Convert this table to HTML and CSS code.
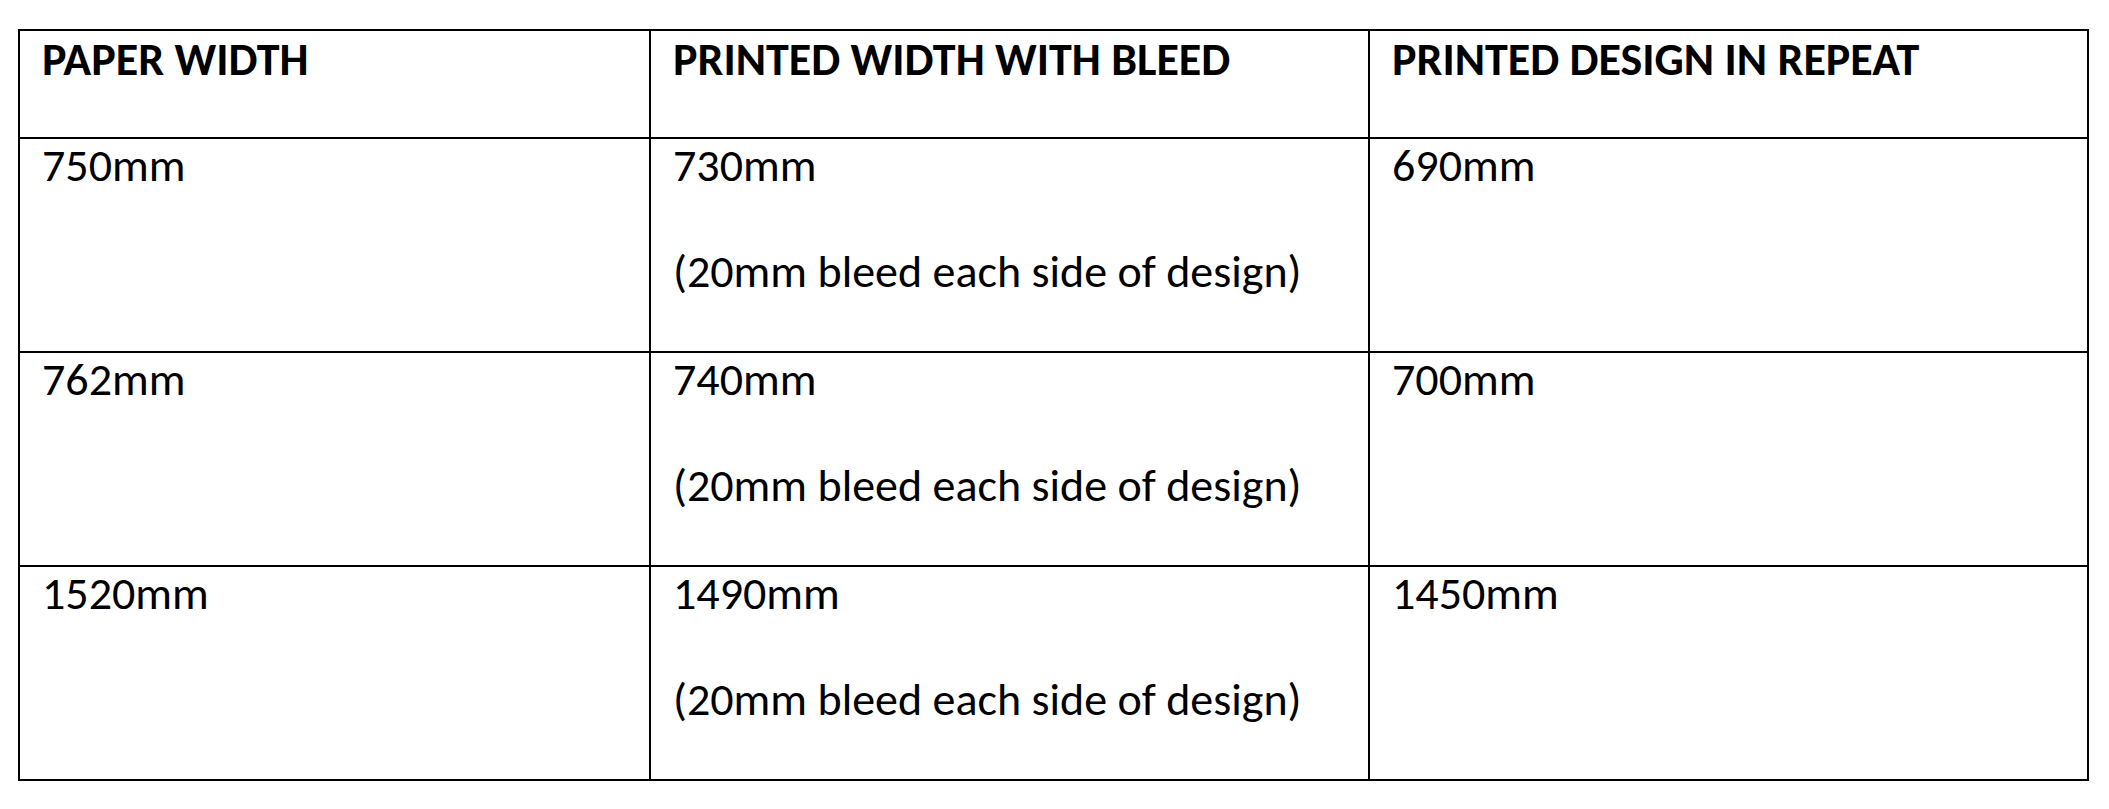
FILE: index.html
```html
<!DOCTYPE html>
<html lang="en">
<head>
<meta charset="utf-8">
<title>Paper widths</title>
<link rel="stylesheet" href="styles.css">
</head>
<body>
<div class="page">
  <table class="spec">
    <colgroup>
      <col class="c1">
      <col class="c2">
      <col class="c3">
    </colgroup>
    <thead>
      <tr class="head-row">
        <th>PAPER WIDTH</th>
        <th>PRINTED WIDTH WITH BLEED</th>
        <th>PRINTED DESIGN IN REPEAT</th>
      </tr>
    </thead>
    <tbody>
      <tr class="body-row">
        <td><p>750mm</p></td>
        <td><p>730mm</p><p class="gap">(20mm bleed each side of design)</p></td>
        <td><p>690mm</p></td>
      </tr>
      <tr class="body-row">
        <td><p>762mm</p></td>
        <td><p>740mm</p><p class="gap">(20mm bleed each side of design)</p></td>
        <td><p>700mm</p></td>
      </tr>
      <tr class="body-row">
        <td><p>1520mm</p></td>
        <td><p>1490mm</p><p class="gap">(20mm bleed each side of design)</p></td>
        <td><p>1450mm</p></td>
      </tr>
    </tbody>
  </table>
</div>
</body>
</html>
```

FILE: styles.css
```css
html, body {
  margin: 0;
  padding: 0;
  background: #ffffff;
}

.page {
  padding: 29px 0 0 18px;
}

.spec {
  border-collapse: collapse;
  width: 2069px;
  table-layout: fixed;
  font-family: Carlito, Lato, "Liberation Sans", sans-serif;
  font-size: 46px;
  color: #000;
}

.c1 { width: 631px; }
.c2 { width: 719px; }
.c3 { width: 719px; }

.spec th,
.spec td {
  border: 2px solid #000;
  vertical-align: top;
  text-align: left;
  padding: 0 20px 0 22px;
  line-height: 53px;
}

.spec th {
  font-weight: 700;
  padding-top: 2px;
}

.spec td {
  font-weight: 400;
  padding-top: 0;
}

.head-row {
  height: 108px;
}

.body-row {
  height: 214px;
}

.spec p {
  margin: 0;
}

.spec p.gap {
  margin-top: 53px;
}
```
